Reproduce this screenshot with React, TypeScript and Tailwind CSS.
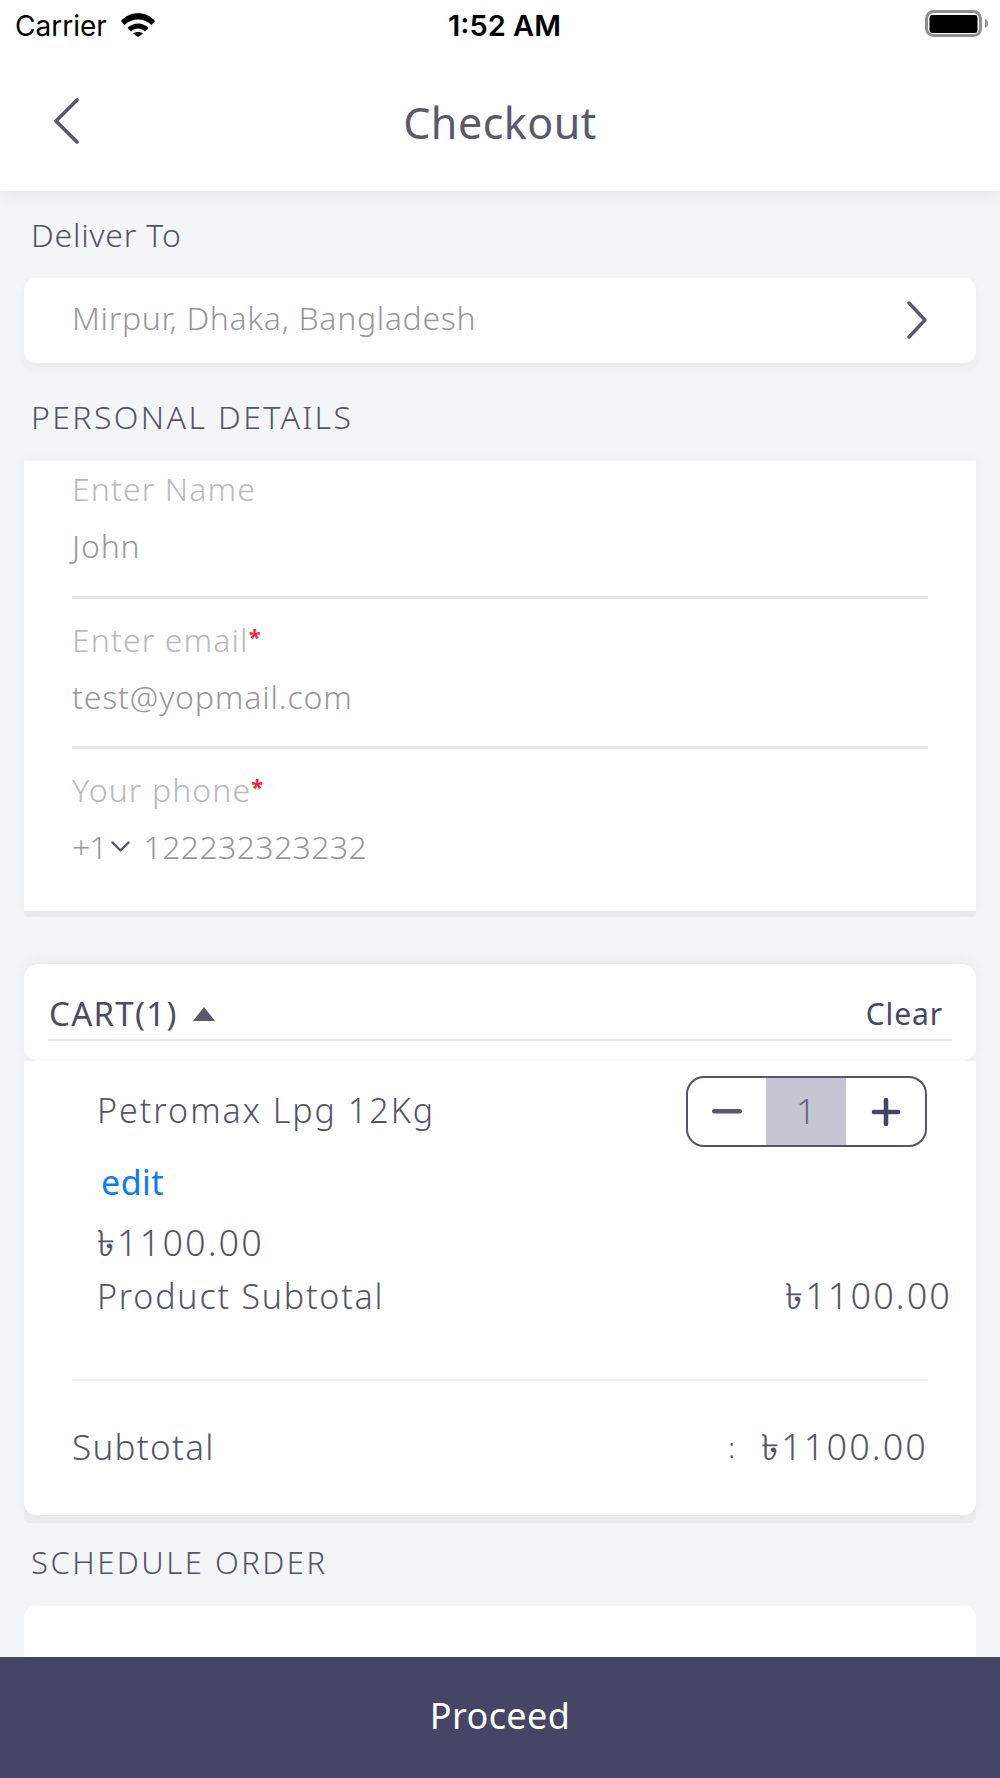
import React from "react";

const font = "font-['Noto_Sans','Lato',sans-serif]";

function Field({ label, req, value, className, children }: { label: string; req?: boolean; value?: string; className: string; children?: React.ReactNode }) {
  return (
    <div className={`mx-[48px] shrink-0 ${className}`}>
      <div className="h-[56px] flex items-center text-[32px] tracking-[1.1px] text-[#b9b9be] font-light">
        {label}
        {req && <span className="self-start mt-[10px] text-[22px] leading-[28px] tracking-normal font-bold text-[#ff2233]">*</span>}
      </div>
      <div className="h-[57px] flex items-center text-[32px] tracking-[0.85px] font-light text-[#98989d]">{children ?? value}</div>
    </div>
  );
}

export default function App() {
  return (
    <div className={`w-[1000px] h-[1778px] flex flex-col overflow-hidden bg-[#f4f5f7] ${font}`}>
      {/* status bar + nav */}
      <header className="relative z-10 h-[191px] shrink-0 bg-white shadow-[0_4px_14px_rgba(40,40,60,0.08)]">
        <div className="h-[50px] pl-[15px] flex items-center relative font-['Inter',sans-serif] text-black">
          <span className="mt-[2px] text-[28px] leading-[50px]">Carrier</span>
          <svg className="absolute left-[120px] top-[13px]" width="36" height="24" viewBox="0 0 36 24">
            <path d="M1 8C9.5 -2.5 26.5 -2.5 35 8L31.5 12C24.5 4.5 11.5 4.5 4.5 12Z" fill="#000" />
            <path d="M7.5 15C13 9 23 9 28.5 15L25 18.5C21 14.5 15 14.5 11 18.5Z" fill="#000" />
            <path d="M13 20.5C15.5 18.5 20.5 18.5 23 20.5L18 24Z" fill="#000" />
          </svg>
          <span className="absolute left-[448px] top-[9px] text-[29px] font-semibold leading-[34px]">1:52 AM</span>
          <svg className="absolute left-[925px] top-[10px]" width="64" height="27" viewBox="0 0 64 27">
            <rect x="1.5" y="1.5" width="54" height="24" rx="7" fill="none" stroke="#8f8f8f" strokeWidth="3" />
            <rect x="4.5" y="5" width="48" height="18" rx="3" fill="#000" />
            <path d="M60 9C62 10 63 11.5 63 13.5C63 15.5 62 17 60 18Z" fill="#8f8f8f" />
          </svg>
        </div>
        <div className="relative h-[141px] flex items-start justify-center">
          <svg className="absolute left-[52px] top-[47px]" width="28" height="48" viewBox="0 0 28 48" fill="none" stroke="#5a596b" strokeWidth="3.8" strokeLinecap="round" strokeLinejoin="round">
            <path d="M25 3L4 24L25 45" />
          </svg>
          <h1 className="mt-[45px] text-[43px] leading-[56px] tracking-[0.5px] text-[#5b5a6c]">Checkout</h1>
        </div>
      </header>

      <main className="flex-1 min-h-0 overflow-hidden">
        <div className="h-[87px] pl-[31px] flex items-center text-[32px] tracking-[0.8px] font-light text-[#55546a]">Deliver To</div>
        <div className="mx-[24px] h-[85px] rounded-[12px] bg-white shadow-[0_5px_10px_rgba(40,40,60,0.05)] px-[48px] pb-[6px] flex items-center justify-between">
          <span className="text-[32px] tracking-[0.65px] font-light text-[#98989d]">Mirpur, Dhaka, Bangladesh</span>
          <svg className="mt-[4px]" width="22" height="38" viewBox="0 0 22 38" fill="none" stroke="#5a596b" strokeWidth="3.4" strokeLinecap="round" strokeLinejoin="round">
            <path d="M3 2L19 19L3 36" />
          </svg>
        </div>
        <div className="h-[98px] pt-[9px] pl-[31px] flex items-center text-[32px] tracking-[2.4px] font-light text-[#55546a]">PERSONAL DETAILS</div>

        <section className="mx-[24px] h-[456px] bg-[#ebecef] pb-[6px] rounded-b-[4px]">
          <div className="h-full bg-white shadow-[0_0_12px_rgba(40,40,60,0.04)]">
            <Field label="Enter Name" value="John" className="h-[138px] border-b-[3px] border-[#e3e3e8]" />
            <Field label="Enter email" req value="test@yopmail.com" className="mt-[13px] h-[137px] border-b-[3px] border-[#e3e3e8]" />
            <Field label="Your phone" req className="mt-[13px]">
              <span className="-tracking-[1px]">+1</span>
              <svg className="ml-[4px] mr-[14px]" width="19" height="11" viewBox="0 0 19 11" fill="none" stroke="#55546a" strokeWidth="2.4" strokeLinecap="round" strokeLinejoin="round">
                <path d="M1.5 1.5L9.5 9.5L17.5 1.5" />
              </svg>
              <span className="tracking-[0.35px]">122232323232</span>
            </Field>
          </div>
        </section>

        <div className="h-[47px]" />

        <section className="mx-[24px] h-[97px] rounded-[14px] bg-white px-[24px] shadow-[0_-3px_12px_rgba(40,40,60,0.06)]">
          <div className="h-[77px] border-b-2 border-[#e9e9ee] flex items-end justify-between pb-[4px] pl-[1px] pr-[9px]">
            <div className="flex items-center text-[33px] tracking-[1.3px] text-[#4c4b60] leading-[42px]">
              CART(1)
              <svg className="ml-[15px]" width="22" height="14" viewBox="0 0 22 14">
                <path d="M11 0L22 14H0Z" fill="#5a596b" />
              </svg>
            </div>
            <span className="text-[30px] tracking-[0.9px] text-[#46466a] leading-[42px]">Clear</span>
          </div>
        </section>

        <section className="mx-[24px] h-[462px] bg-[#ebecef] pb-[8px] rounded-b-[6px]">
          <div className="h-full bg-white rounded-b-[12px] shadow-[0_0_12px_rgba(40,40,60,0.04)]">
            <div className="h-[318px] pl-[73px] pr-[24px] pt-[15px]">
              <div className="flex justify-between h-[71px] pr-[25px]">
                <span className="mt-[12px] text-[34px] tracking-[2px] font-light leading-[44px] text-[#55546a]">Petromax Lpg 12Kg</span>
                <div className="w-[241px] h-[71px] rounded-[18px] border-[2.5px] border-[#55546c] flex overflow-hidden">
                  <div className="w-[78px] flex items-center justify-center">
                    <svg width="30" height="5" viewBox="0 0 30 5"><rect width="30" height="4.5" rx="2.2" fill="#5a596b" /></svg>
                  </div>
                  <div className="w-[80px] bg-[#c5c6d1] flex items-center justify-center text-[35px] font-light text-[#66657a]">1</div>
                  <div className="flex-1 flex items-center justify-center">
                    <svg width="30" height="30" viewBox="0 0 30 30" fill="none" stroke="#454665" strokeWidth="4.6" strokeLinecap="round"><path d="M15 3V27M3 15H27" /></svg>
                  </div>
                </div>
              </div>
              <div className="mt-[13px] pl-[4px] h-[44px] flex items-center text-[34px] tracking-[0.5px] text-[#0a7aff]">edit</div>
              <div className="mt-[17px] h-[44px] flex items-center text-[36px] tracking-[2.1px] font-light text-[#55546a]">৳1100.00</div>
              <div className="mt-[9px] h-[44px] flex items-center justify-between text-[34px] tracking-[1.8px] font-light text-[#55546a]">
                <span>Product Subtotal</span>
                <span className="text-[36px] tracking-[2.1px]">৳1100.00</span>
              </div>
            </div>
            <div className="mx-[48px] h-[2px] bg-[#eeeef1]" />
            <div className="mx-[48px] h-[134px] pb-[2px] flex items-center justify-between text-[35px] tracking-[1.3px] font-light text-[#55546a]">
              <span>Subtotal</span>
              <span className="flex items-center text-[36px] tracking-[2.1px]"><span className="mr-[24px] text-[28px]">:</span>৳1100.00</span>
            </div>
          </div>
        </section>

        <div className="h-[83px] pb-[4px] pl-[31px] flex items-center text-[31px] tracking-[2.5px] font-light text-[#55546a]">SCHEDULE ORDER</div>
        <div className="mx-[24px] h-[100px] rounded-[12px] bg-white" />
      </main>

      <footer className="h-[121px] pb-[4px] shrink-0 bg-[#454665] flex items-center justify-center text-[36px] tracking-[0.4px] text-white">Proceed</footer>
    </div>
  );
}
